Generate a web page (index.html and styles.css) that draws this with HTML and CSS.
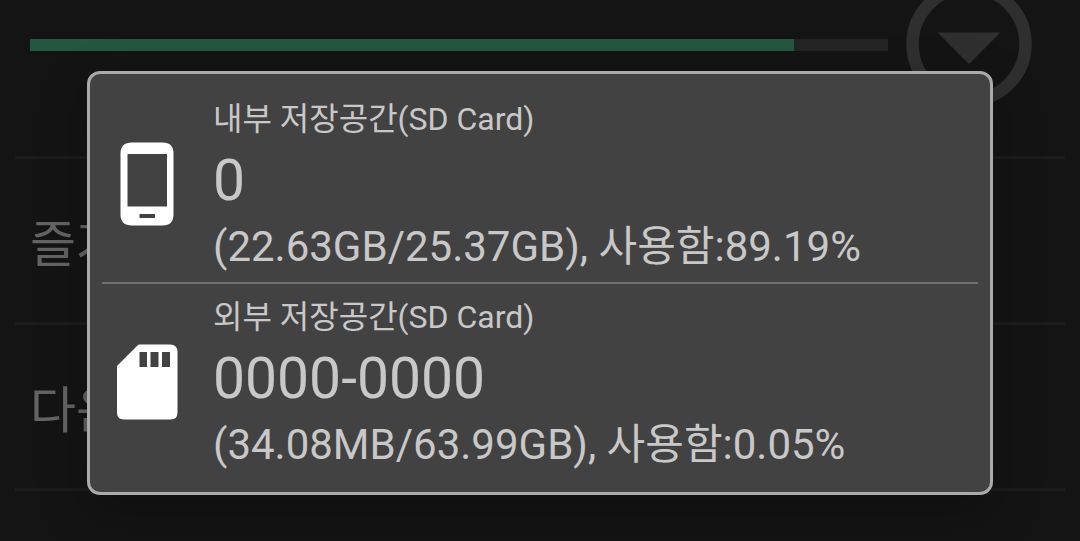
FILE: index.html
```html
<!DOCTYPE html>
<html lang="ko">
<head>
<meta charset="utf-8">
<meta name="viewport" content="width=device-width, initial-scale=1">
<title>저장공간</title>
<link rel="stylesheet" href="styles.css">
</head>
<body>
<main class="page">
  <header class="usage">
    <progress class="usage-bar" max="100" value="89.05" aria-label="사용함"></progress>
    <button class="toggle" type="button" aria-label="저장공간 선택">
      <svg class="toggle-icon" viewBox="0 0 126 126" aria-hidden="true">
        <circle cx="63" cy="62" r="56.5" fill="none" stroke="#2f2f2f" stroke-width="12.5"/>
        <path d="M31.500 50.500h63L63 82z" fill="#2f2f2f"/>
      </svg>
    </button>
  </header>
  <nav class="sections">
    <a class="section" href="#favorites">즐겨찾기</a>
    <a class="section" href="#downloads">다운로드</a>
  </nav>
</main>
<div class="popup" role="dialog" aria-label="저장공간 선택">
  <ul class="storages">
    <li class="storage">
      <svg class="storage-icon" viewBox="3 1 93 96" aria-hidden="true">
        <path fill="#fff" fill-rule="evenodd" d="M33 6.500H63.500Q74.500 6.500 74.500 17.500V78.500Q74.500 89.500 63.500 89.500H33Q21.500 89.500 21.500 78.500V17.500Q21.500 6.500 33 6.500ZM28.500 18V70.500H68V18ZM40.500 78V82H56V78Z"/>
      </svg>
      <div class="storage-text">
        <p class="storage-kind">내부 저장공간(SD Card)</p>
        <p class="storage-name">0</p>
        <p class="storage-size">(22.63GB/25.37GB), 사용함:89.19%</p>
      </div>
    </li>
    <li class="storage">
      <svg class="storage-icon" viewBox="3 1 93 96" aria-hidden="true">
        <path fill="#fff" fill-rule="evenodd" d="M40.500 10.500H71Q78.500 10.500 78.500 18V78.500Q78.500 85.500 71.500 85.500H25Q18 85.500 18 78.500V33Q18 32 18.700 31.300L38.500 11.500Q39.500 10.500 40.500 10.500ZM40.500 18V33H48V18ZM51.500 18V33H59.500V18ZM63 18V33H71V18Z"/>
      </svg>
      <div class="storage-text">
        <p class="storage-kind">외부 저장공간(SD Card)</p>
        <p class="storage-name">0000-0000</p>
        <p class="storage-size">(34.08MB/63.99GB), 사용함:0.05%</p>
      </div>
    </li>
  </ul>
</div>
</body>
</html>
```
FILE: styles.css
```css
* {
  box-sizing: border-box;
}

body {
  margin: 0;
  min-height: 100vh;
  overflow: hidden;
  background: #141414;
  color: #c8c8c8;
  font-family: Roboto, "Noto Sans CJK KR", sans-serif;
}

.page {
  padding: 0 15px;
}

.usage {
  display: flex;
  align-items: center;
  gap: 18px;
  margin-top: -18px;
  padding: 0 33px 48px 15px;
}

.usage-bar {
  appearance: none;
  flex: 1;
  min-width: 0;
  height: 12px;
  border: 0;
  background: #242424;
}

.usage-bar::-webkit-progress-bar {
  background: #242424;
}

.usage-bar::-webkit-progress-value {
  background: #24573f;
}

.usage-bar::-moz-progress-bar {
  background: #24573f;
}

.toggle {
  flex: none;
  width: 126px;
  height: 126px;
  padding: 0;
  border: 0;
  border-radius: 50%;
  background: none;
}

.toggle-icon {
  display: block;
  width: 100%;
}

.sections {
  border-bottom: 3px solid #1c1c1c;
}

.section {
  display: flex;
  align-items: center;
  height: 166px;
  padding: 0 15px 2px;
  border-top: 3px solid #1c1c1c;
  color: #646464;
  font-size: 50px;
  text-decoration: none;
}

.popup {
  position: absolute;
  top: 71px;
  left: 87px;
  right: 87px;
  padding: 16px 12px 12px;
  border: 3px solid #aaa;
  border-radius: 13px;
  background: #424242;
  box-shadow: 0 16px 48px rgba(0, 0, 0, 0.25);
}

.storages {
  margin: 0;
  padding: 0;
  list-style: none;
}

.storage {
  display: flex;
  align-items: center;
  gap: 18px;
  padding: 4px 0 6px;
}

.storage + .storage {
  border-top: 2px solid #707070;
  padding-top: 8px;
}

.storage-icon {
  flex: none;
  width: 93px;
  height: 96px;
}

.storage-text p {
  margin: 0;
}

.storage-text .storage-kind {
  font-size: 32px;
  line-height: 50px;
}

.storage-text .storage-name {
  font-size: 57px;
  line-height: 73px;
}

.storage-text .storage-size {
  font-size: 42px;
  line-height: 59px;
}
```
